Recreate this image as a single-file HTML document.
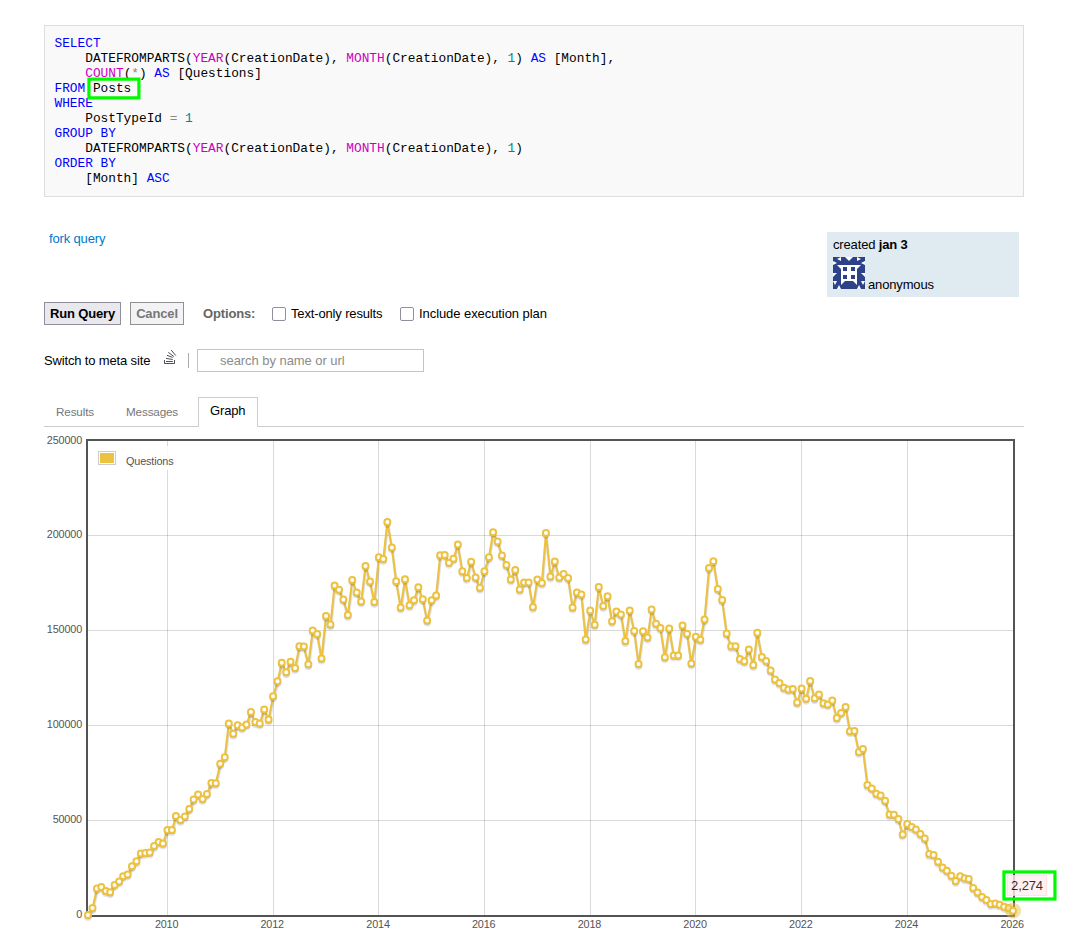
<!DOCTYPE html>
<html lang="en">
<head>
<meta charset="utf-8">
<title>Questions per month - Stack Exchange Data Explorer</title>
<style>
html,body{margin:0;padding:0;background:#fff;}
body{width:1067px;height:944px;position:relative;overflow:hidden;font-family:"Liberation Sans",Arial,sans-serif;font-size:13px;color:#000;letter-spacing:-0.15px;}
.abs{position:absolute;white-space:nowrap;}
pre.code{position:absolute;left:44px;top:25px;width:958.5px;height:150px;margin:0;padding:10px 10px 10px 9.5px;border:1px solid #ddd;background:#f9f9f9;
 font-family:"Liberation Mono","DejaVu Sans Mono",monospace;font-size:12.8px;line-height:15px;color:#000;box-sizing:content-box;letter-spacing:0;}
.k{color:#0000ff}.f{color:#cc00bb}.n{color:#008a8a}.o{color:#888}
.hl{position:absolute;border:3px solid #0be60b;box-sizing:border-box;}
a.fork{position:absolute;left:49px;top:231px;color:#0077cc;text-decoration:none;line-height:15px;}
.uinfo{position:absolute;left:827px;top:232px;width:192px;height:65px;background:#e0eaf1;}
.uinfo .t{position:absolute;left:6px;top:5px;line-height:15px;white-space:nowrap;}
.uinfo .ident{position:absolute;left:6px;top:25px;}
.uinfo .u{position:absolute;left:41px;top:45px;line-height:15px;}
.btn{position:absolute;top:302px;height:23px;box-sizing:border-box;border:1px solid #8f8f9d;background:#e9e9ed;font-weight:bold;font-size:13px;line-height:21px;text-align:center;color:#000;}
.btn.dis{background:#f3f3f5;color:#777;border-color:#919191;}
.opt{position:absolute;top:306px;left:203px;font-weight:bold;color:#666;line-height:15px;}
.cb{position:absolute;top:307px;width:14px;height:14px;box-sizing:border-box;border:1px solid #8f8f9d;border-radius:2px;background:#fff;}
.lbl{position:absolute;top:306px;line-height:15px;}
.sw{position:absolute;left:44px;top:353px;line-height:15px;}
.soicon{position:absolute;left:160px;top:346px;}
.sep{position:absolute;left:188px;top:353px;width:1px;height:15px;background:#aaa;}
.search{position:absolute;left:197px;top:349px;width:227px;height:23px;box-sizing:border-box;border:1px solid #c4c4c4;background:#fff;color:#8b8b8b;line-height:21px;padding-left:22px;letter-spacing:-0.05px;}
.tabs{position:absolute;left:44px;top:426px;width:980px;height:1px;background:#ccc;}
.tab{position:absolute;color:#777;font-size:11.7px;line-height:14px;top:405px;}
.tab.act{left:198px;top:397px;width:60px;height:30px;box-sizing:border-box;border:1px solid #ccc;border-bottom:0;background:#fff;color:#000;font-size:13px;line-height:15px;padding:5px 0 0 11px;}
svg.chart{position:absolute;left:0;top:0;}
.legbox{position:absolute;left:98px;top:451px;width:18px;height:14px;box-sizing:border-box;border:1px solid #ccc;padding:1px;}
.legbox i{display:block;width:14px;height:10px;background:#edc240;}
.tip{position:absolute;left:1007px;top:875px;width:40px;height:21px;box-sizing:border-box;border:1px solid #fdd;background:#fee;opacity:.8;text-align:center;line-height:17px;padding:1px 0 0 0;color:#000;}
</style>
</head>
<body>
<pre class="code"><span class="k">SELECT</span>
    DATEFROMPARTS(<span class="f">YEAR</span>(CreationDate), <span class="f">MONTH</span>(CreationDate), <span class="n">1</span>) <span class="k">AS</span> [Month],
    <span class="f">COUNT</span>(<span class="o">*</span>) <span class="k">AS</span> [Questions]
<span class="k">FROM</span> Posts
<span class="k">WHERE</span>
    PostTypeId <span class="o">=</span> <span class="n">1</span>
<span class="k">GROUP BY</span>
    DATEFROMPARTS(<span class="f">YEAR</span>(CreationDate), <span class="f">MONTH</span>(CreationDate), <span class="n">1</span>)
<span class="k">ORDER BY</span>
    [Month] <span class="k">ASC</span></pre>

<a class="fork">fork query</a>
<div class="uinfo"><div class="t">created <b>jan 3</b></div><svg class="ident" width="32" height="32" viewBox="0 0 32 32">
<rect width="32" height="32" fill="#2e4289"/>
<g fill="#fff">
<path d="M8 0V4L4 2zM0 4V8L4 6zM12 0H20L16 4zM24 0V4L28 2zM32 4V8L28 6z"/>
<path d="M4 8H28L24 12V28L20 24H12L8 28V12z"/>
<path d="M0 16H4L0 20zM32 16H28L32 20zM0 24H4L2 28zM32 24H28L30 28zM4 32H8L6 28zM28 32H24L26 28z"/>
</g>
<path fill="#2e4289" d="M10 10h4v4h-4zM18 10h4v4h-4zM10 18h4v4h-4zM18 18h4v4h-4z"/>
</svg><div class="u">anonymous</div></div>

<div class="btn" style="left:44px;width:77px">Run Query</div>
<div class="btn dis" style="left:130px;width:54px">Cancel</div>
<div class="opt">Options:</div>
<div class="cb" style="left:272px"></div><div class="lbl" style="left:291px">Text-only results</div>
<div class="cb" style="left:400px"></div><div class="lbl" style="left:419px;letter-spacing:-0.07px">Include execution plan</div>

<div class="sw">Switch to meta site</div>
<svg class="soicon" width="20" height="22" viewBox="0 0 20 22">
<g fill="none" stroke="#4b5055" stroke-width="1">
<path d="M4.5 14V17.5H14.5V14"/>
<path d="M6 15.5H12.8"/>
<path d="M6.1 12.4L12.7 13.5"/>
<path d="M7 9.3L12.7 11.5"/>
<path d="M8.3 6.4L14 10.6"/>
<path d="M11.1 4L15.85 9.6"/>
</g></svg>
<div class="sep"></div>
<div class="search">search by name or url</div>

<div class="tabs"></div>
<div class="tab" style="left:56px">Results</div>
<div class="tab" style="left:126px">Messages</div>
<div class="tab act">Graph</div>

<svg class="chart" width="1067" height="944" viewBox="0 0 1067 944">
<path d="M167.5 441V915M273.5 441V915M378.5 441V915M484.5 441V915M590.5 441V915M695.5 441V915M801.5 441V915M907.5 441V915" stroke="#545454" stroke-opacity="0.22" stroke-width="1" fill="none" shape-rendering="crispEdges"/>
<path d="M88 820.5H1013M88 725.5H1013M88 630.5H1013M88 535.5H1013" stroke="#545454" stroke-opacity="0.22" stroke-width="1" fill="none" shape-rendering="crispEdges"/>
<rect x="95" y="446" width="82" height="24" fill="#fff" fill-opacity="0.85"/>
<rect x="87" y="440" width="927" height="476" fill="none" stroke="#545454" stroke-width="2" shape-rendering="crispEdges"/>
<polyline points="88.43,917.46 92.92,910.46 97.4,890.96 101.75,889.46 106.23,893.46 110.57,894.71 115.06,887.36 119.54,884.06 123.59,878.71 128.08,876.96 132.42,868.71 136.91,863.71 141.25,856.06 145.73,855.36 150.22,854.86 154.56,848.36 159.04,844.36 163.38,845.86 167.87,832.46 172.35,832.56 176.41,818.46 180.89,822.46 185.23,818.96 189.72,811.56 194.06,802.06 198.54,796.96 203.03,801.56 207.37,796.56 211.85,785.46 216.19,785.71 220.68,766.21 225.17,759.76 229.22,725.86 233.7,736.16 238.04,727.71 242.53,729.96 246.87,726.96 251.35,714.56 255.84,724.56 260.18,725.96 264.67,711.86 269.01,721.86 273.49,698.71 277.98,683.71 282.17,665.21 286.66,674.71 291,664.16 295.48,670.56 299.83,648.71 304.31,648.96 308.8,666.71 313.14,633.06 317.62,636.46 321.96,660.86 326.45,618.36 330.93,626.86 334.99,588.06 339.47,592.21 343.81,602.06 348.3,617.46 352.64,582.46 357.12,594.86 361.61,603.96 365.95,568.36 370.43,583.96 374.77,604.36 379.26,559.71 383.75,561.56 387.8,524.36 392.28,549.96 396.62,583.71 401.11,609.96 405.45,581.71 409.93,607.76 414.42,602.76 418.76,589.66 423.25,601.71 427.59,623.06 432.07,602.76 436.56,598.06 440.61,557.76 445.09,557.46 449.43,565.21 453.92,561.21 458.26,546.96 462.75,573.66 467.23,580.36 471.57,564.21 476.06,579.96 480.4,590.21 484.88,573.71 489.37,559.71 493.56,534.71 498.05,543.96 502.39,557.86 506.88,567.46 511.22,581.86 515.7,572.46 520.19,591.86 524.53,584.96 529.01,584.96 533.35,609.56 537.84,581.86 542.33,585.36 546.38,535.56 550.86,579.06 555.2,563.96 559.69,579.96 564.03,576.46 568.51,580.56 573,609.86 577.34,595.06 581.83,597.06 586.17,642.06 590.65,612.96 595.14,627.16 599.19,589.36 603.67,608.46 608.01,598.71 612.5,623.71 616.84,613.96 621.33,616.86 625.81,643.46 630.15,613.06 634.64,633.46 638.98,666.56 643.46,633.71 647.95,640.06 652,612.06 656.49,626.21 660.83,630.36 665.31,659.71 669.65,630.86 674.14,657.86 678.62,658.06 682.96,627.96 687.45,636.21 691.79,665.96 696.27,639.21 700.76,642.21 704.96,621.86 709.44,570.56 713.78,563.71 718.27,591.56 722.61,602.46 727.09,635.96 731.58,648.71 735.92,648.71 740.41,661.56 744.75,663.71 749.23,652.06 753.72,667.46 757.77,635.26 762.25,659.56 766.59,663.46 771.08,672.86 775.42,682.06 779.91,685.56 784.39,690.21 788.73,691.86 793.22,691.46 797.56,704.96 802.04,690.96 806.53,701.21 810.58,683.46 815.06,700.66 819.41,697.06 823.89,705.71 828.23,707.06 832.72,703.06 837.2,720.56 841.54,715.56 846.03,709.56 850.37,733.71 854.85,733.36 859.34,754.56 863.39,751.46 867.88,787.46 872.22,790.91 876.7,796.21 881.04,798.06 885.53,803.21 890.01,817.06 894.35,817.21 898.84,821.46 903.18,836.86 907.67,826.56 912.15,829.56 916.35,832.06 920.83,836.56 925.17,840.86 929.66,856.46 934,857.46 938.48,864.26 942.97,870.06 947.31,873.21 951.8,878.11 956.14,883.46 960.62,878.66 965.11,880.71 969.16,881.36 973.64,890.46 977.99,895.06 982.47,899.56 986.81,902.46 991.3,906.46 995.78,905.96 1000.12,907.16 1004.61,909.16 1008.95,910.46 1013.43,913.16" fill="none" stroke="#000" stroke-opacity="0.1" stroke-width="3" stroke-linejoin="round"/>
<polyline points="88.3,916.72 92.79,909.72 97.27,890.22 101.62,888.72 106.1,892.72 110.44,893.97 114.93,886.62 119.41,883.32 123.46,877.97 127.95,876.22 132.29,867.97 136.77,862.97 141.12,855.32 145.6,854.62 150.09,854.12 154.43,847.62 158.91,843.62 163.25,845.12 167.74,831.72 172.22,831.82 176.28,817.72 180.76,821.72 185.1,818.22 189.59,810.82 193.93,801.32 198.41,796.22 202.9,800.82 207.24,795.82 211.72,784.72 216.06,784.97 220.55,765.47 225.04,759.02 229.09,725.12 233.57,735.42 237.91,726.97 242.4,729.22 246.74,726.22 251.22,713.82 255.71,723.82 260.05,725.22 264.54,711.12 268.88,721.12 273.36,697.97 277.85,682.97 282.04,664.47 286.53,673.97 290.87,663.42 295.35,669.82 299.7,647.97 304.18,648.22 308.67,665.97 313.01,632.32 317.49,635.72 321.83,660.12 326.32,617.62 330.8,626.12 334.85,587.32 339.34,591.47 343.68,601.32 348.17,616.72 352.51,581.72 356.99,594.12 361.48,603.22 365.82,567.62 370.3,583.22 374.64,603.62 379.13,558.97 383.62,560.82 387.67,523.62 392.15,549.22 396.49,582.97 400.98,609.22 405.32,580.97 409.8,607.02 414.29,602.02 418.63,588.92 423.12,600.97 427.46,622.32 431.94,602.02 436.43,597.32 440.48,557.02 444.96,556.72 449.3,564.47 453.79,560.47 458.13,546.22 462.62,572.92 467.1,579.62 471.44,563.47 475.93,579.22 480.27,589.47 484.75,572.97 489.24,558.97 493.43,533.97 497.92,543.22 502.26,557.12 506.75,566.72 511.09,581.12 515.57,571.72 520.06,591.12 524.4,584.22 528.88,584.22 533.22,608.82 537.71,581.12 542.19,584.62 546.25,534.82 550.73,578.32 555.07,563.22 559.56,579.22 563.9,575.72 568.38,579.82 572.87,609.12 577.21,594.32 581.7,596.32 586.04,641.32 590.52,612.22 595.01,626.42 599.06,588.62 603.54,607.72 607.88,597.97 612.37,622.97 616.71,613.22 621.2,616.12 625.68,642.72 630.02,612.32 634.51,632.72 638.85,665.82 643.33,632.97 647.82,639.32 651.87,611.32 656.35,625.47 660.7,629.62 665.18,658.97 669.52,630.12 674.01,657.12 678.49,657.32 682.83,627.22 687.32,635.47 691.66,665.22 696.14,638.47 700.63,641.47 704.83,621.12 709.31,569.82 713.65,562.97 718.14,590.82 722.48,601.72 726.96,635.22 731.45,647.97 735.79,647.97 740.27,660.82 744.62,662.97 749.1,651.32 753.59,666.72 757.64,634.52 762.12,658.82 766.46,662.72 770.95,672.12 775.29,681.32 779.78,684.82 784.26,689.47 788.6,691.12 793.09,690.72 797.43,704.22 801.91,690.22 806.4,700.47 810.45,682.72 814.93,699.92 819.28,696.32 823.76,704.97 828.1,706.32 832.59,702.32 837.07,719.82 841.41,714.82 845.9,708.82 850.24,732.97 854.72,732.62 859.21,753.82 863.26,750.72 867.75,786.72 872.09,790.17 876.57,795.47 880.91,797.32 885.4,802.47 889.88,816.32 894.22,816.47 898.71,820.72 903.05,836.12 907.54,825.82 912.02,828.82 916.22,831.32 920.7,835.82 925.04,840.12 929.53,855.72 933.87,856.72 938.35,863.52 942.84,869.32 947.18,872.47 951.67,877.37 956.01,882.72 960.49,877.92 964.98,879.97 969.03,880.62 973.51,889.72 977.85,894.32 982.34,898.82 986.68,901.72 991.17,905.72 995.65,905.22 999.99,906.42 1004.48,908.42 1008.82,909.72 1013.3,912.42" fill="none" stroke="#000" stroke-opacity="0.1" stroke-width="1.5" stroke-linejoin="round"/>
<polyline points="88,915 92.49,908 96.97,888.5 101.31,887 105.8,891 110.14,892.25 114.62,884.9 119.11,881.6 123.16,876.25 127.64,874.5 131.99,866.25 136.47,861.25 140.81,853.6 145.3,852.9 149.78,852.4 154.12,845.9 158.61,841.9 162.95,843.4 167.43,830 171.92,830.1 175.97,816 180.46,820 184.8,816.5 189.28,809.1 193.62,799.6 198.11,794.5 202.59,799.1 206.93,794.1 211.42,783 215.76,783.25 220.25,763.75 224.73,757.3 228.78,723.4 233.27,733.7 237.61,725.25 242.09,727.5 246.44,724.5 250.92,712.1 255.41,722.1 259.75,723.5 264.23,709.4 268.57,719.4 273.06,696.25 277.54,681.25 281.74,662.75 286.22,672.25 290.57,661.7 295.05,668.1 299.39,646.25 303.88,646.5 308.36,664.25 312.7,630.6 317.19,634 321.53,658.4 326.01,615.9 330.5,624.4 334.55,585.6 339.04,589.75 343.38,599.6 347.86,615 352.2,580 356.69,592.4 361.17,601.5 365.51,565.9 370,581.5 374.34,601.9 378.83,557.25 383.31,559.1 387.36,521.9 391.85,547.5 396.19,581.25 400.67,607.5 405.01,579.25 409.5,605.3 413.99,600.3 418.33,587.2 422.81,599.25 427.15,620.6 431.64,600.3 436.12,595.6 440.17,555.3 444.66,555 449,562.75 453.49,558.75 457.83,544.5 462.31,571.2 466.8,577.9 471.14,561.75 475.62,577.5 479.96,587.75 484.45,571.25 488.93,557.25 493.13,532.25 497.62,541.5 501.96,555.4 506.44,565 510.78,579.4 515.27,570 519.75,589.4 524.09,582.5 528.58,582.5 532.92,607.1 537.41,579.4 541.89,582.9 545.94,533.1 550.43,576.6 554.77,561.5 559.25,577.5 563.59,574 568.08,578.1 572.57,607.4 576.91,592.6 581.39,594.6 585.73,639.6 590.22,610.5 594.7,624.7 598.75,586.9 603.24,606 607.58,596.25 612.07,621.25 616.41,611.5 620.89,614.4 625.38,641 629.72,610.6 634.2,631 638.54,664.1 643.03,631.25 647.51,637.6 651.57,609.6 656.05,623.75 660.39,627.9 664.88,657.25 669.22,628.4 673.7,655.4 678.19,655.6 682.53,625.5 687.01,633.75 691.36,663.5 695.84,636.75 700.33,639.75 704.52,619.4 709.01,568.1 713.35,561.25 717.83,589.1 722.17,600 726.66,633.5 731.14,646.25 735.49,646.25 739.97,659.1 744.31,661.25 748.8,649.6 753.28,665 757.33,632.8 761.82,657.1 766.16,661 770.65,670.4 774.99,679.6 779.47,683.1 783.96,687.75 788.3,689.4 792.78,689 797.12,702.5 801.61,688.5 806.09,698.75 810.15,681 814.63,698.2 818.97,694.6 823.46,703.25 827.8,704.6 832.28,700.6 836.77,718.1 841.11,713.1 845.59,707.1 849.93,731.25 854.42,730.9 858.91,752.1 862.96,749 867.44,785 871.78,788.45 876.27,793.75 880.61,795.6 885.09,800.75 889.58,814.6 893.92,814.75 898.41,819 902.75,834.4 907.23,824.1 911.72,827.1 915.91,829.6 920.4,834.1 924.74,838.4 929.22,854 933.57,855 938.05,861.8 942.54,867.6 946.88,870.75 951.36,875.65 955.7,881 960.19,876.2 964.67,878.25 968.73,878.9 973.21,888 977.55,892.6 982.04,897.1 986.38,900 990.86,904 995.35,903.5 999.69,904.7 1004.17,906.7 1008.51,908 1013,910.7" fill="none" stroke="#edc240" stroke-width="2" stroke-linejoin="round"/>
<path d="M91 917.25a3 3 0 0 1 -6 0M95.49 910.25a3 3 0 0 1 -6 0M99.97 890.75a3 3 0 0 1 -6 0M104.31 889.25a3 3 0 0 1 -6 0M108.8 893.25a3 3 0 0 1 -6 0M113.14 894.5a3 3 0 0 1 -6 0M117.62 887.15a3 3 0 0 1 -6 0M122.11 883.85a3 3 0 0 1 -6 0M126.16 878.5a3 3 0 0 1 -6 0M130.64 876.75a3 3 0 0 1 -6 0M134.99 868.5a3 3 0 0 1 -6 0M139.47 863.5a3 3 0 0 1 -6 0M143.81 855.85a3 3 0 0 1 -6 0M148.3 855.15a3 3 0 0 1 -6 0M152.78 854.65a3 3 0 0 1 -6 0M157.12 848.15a3 3 0 0 1 -6 0M161.61 844.15a3 3 0 0 1 -6 0M165.95 845.65a3 3 0 0 1 -6 0M170.43 832.25a3 3 0 0 1 -6 0M174.92 832.35a3 3 0 0 1 -6 0M178.97 818.25a3 3 0 0 1 -6 0M183.46 822.25a3 3 0 0 1 -6 0M187.8 818.75a3 3 0 0 1 -6 0M192.28 811.35a3 3 0 0 1 -6 0M196.62 801.85a3 3 0 0 1 -6 0M201.11 796.75a3 3 0 0 1 -6 0M205.59 801.35a3 3 0 0 1 -6 0M209.93 796.35a3 3 0 0 1 -6 0M214.42 785.25a3 3 0 0 1 -6 0M218.76 785.5a3 3 0 0 1 -6 0M223.25 766a3 3 0 0 1 -6 0M227.73 759.55a3 3 0 0 1 -6 0M231.78 725.65a3 3 0 0 1 -6 0M236.27 735.95a3 3 0 0 1 -6 0M240.61 727.5a3 3 0 0 1 -6 0M245.09 729.75a3 3 0 0 1 -6 0M249.44 726.75a3 3 0 0 1 -6 0M253.92 714.35a3 3 0 0 1 -6 0M258.41 724.35a3 3 0 0 1 -6 0M262.75 725.75a3 3 0 0 1 -6 0M267.23 711.65a3 3 0 0 1 -6 0M271.57 721.65a3 3 0 0 1 -6 0M276.06 698.5a3 3 0 0 1 -6 0M280.54 683.5a3 3 0 0 1 -6 0M284.74 665a3 3 0 0 1 -6 0M289.22 674.5a3 3 0 0 1 -6 0M293.57 663.95a3 3 0 0 1 -6 0M298.05 670.35a3 3 0 0 1 -6 0M302.39 648.5a3 3 0 0 1 -6 0M306.88 648.75a3 3 0 0 1 -6 0M311.36 666.5a3 3 0 0 1 -6 0M315.7 632.85a3 3 0 0 1 -6 0M320.19 636.25a3 3 0 0 1 -6 0M324.53 660.65a3 3 0 0 1 -6 0M329.01 618.15a3 3 0 0 1 -6 0M333.5 626.65a3 3 0 0 1 -6 0M337.55 587.85a3 3 0 0 1 -6 0M342.04 592a3 3 0 0 1 -6 0M346.38 601.85a3 3 0 0 1 -6 0M350.86 617.25a3 3 0 0 1 -6 0M355.2 582.25a3 3 0 0 1 -6 0M359.69 594.65a3 3 0 0 1 -6 0M364.17 603.75a3 3 0 0 1 -6 0M368.51 568.15a3 3 0 0 1 -6 0M373 583.75a3 3 0 0 1 -6 0M377.34 604.15a3 3 0 0 1 -6 0M381.83 559.5a3 3 0 0 1 -6 0M386.31 561.35a3 3 0 0 1 -6 0M390.36 524.15a3 3 0 0 1 -6 0M394.85 549.75a3 3 0 0 1 -6 0M399.19 583.5a3 3 0 0 1 -6 0M403.67 609.75a3 3 0 0 1 -6 0M408.01 581.5a3 3 0 0 1 -6 0M412.5 607.55a3 3 0 0 1 -6 0M416.99 602.55a3 3 0 0 1 -6 0M421.33 589.45a3 3 0 0 1 -6 0M425.81 601.5a3 3 0 0 1 -6 0M430.15 622.85a3 3 0 0 1 -6 0M434.64 602.55a3 3 0 0 1 -6 0M439.12 597.85a3 3 0 0 1 -6 0M443.17 557.55a3 3 0 0 1 -6 0M447.66 557.25a3 3 0 0 1 -6 0M452 565a3 3 0 0 1 -6 0M456.49 561a3 3 0 0 1 -6 0M460.83 546.75a3 3 0 0 1 -6 0M465.31 573.45a3 3 0 0 1 -6 0M469.8 580.15a3 3 0 0 1 -6 0M474.14 564a3 3 0 0 1 -6 0M478.62 579.75a3 3 0 0 1 -6 0M482.96 590a3 3 0 0 1 -6 0M487.45 573.5a3 3 0 0 1 -6 0M491.93 559.5a3 3 0 0 1 -6 0M496.13 534.5a3 3 0 0 1 -6 0M500.62 543.75a3 3 0 0 1 -6 0M504.96 557.65a3 3 0 0 1 -6 0M509.44 567.25a3 3 0 0 1 -6 0M513.78 581.65a3 3 0 0 1 -6 0M518.27 572.25a3 3 0 0 1 -6 0M522.75 591.65a3 3 0 0 1 -6 0M527.09 584.75a3 3 0 0 1 -6 0M531.58 584.75a3 3 0 0 1 -6 0M535.92 609.35a3 3 0 0 1 -6 0M540.41 581.65a3 3 0 0 1 -6 0M544.89 585.15a3 3 0 0 1 -6 0M548.94 535.35a3 3 0 0 1 -6 0M553.43 578.85a3 3 0 0 1 -6 0M557.77 563.75a3 3 0 0 1 -6 0M562.25 579.75a3 3 0 0 1 -6 0M566.59 576.25a3 3 0 0 1 -6 0M571.08 580.35a3 3 0 0 1 -6 0M575.57 609.65a3 3 0 0 1 -6 0M579.91 594.85a3 3 0 0 1 -6 0M584.39 596.85a3 3 0 0 1 -6 0M588.73 641.85a3 3 0 0 1 -6 0M593.22 612.75a3 3 0 0 1 -6 0M597.7 626.95a3 3 0 0 1 -6 0M601.75 589.15a3 3 0 0 1 -6 0M606.24 608.25a3 3 0 0 1 -6 0M610.58 598.5a3 3 0 0 1 -6 0M615.07 623.5a3 3 0 0 1 -6 0M619.41 613.75a3 3 0 0 1 -6 0M623.89 616.65a3 3 0 0 1 -6 0M628.38 643.25a3 3 0 0 1 -6 0M632.72 612.85a3 3 0 0 1 -6 0M637.2 633.25a3 3 0 0 1 -6 0M641.54 666.35a3 3 0 0 1 -6 0M646.03 633.5a3 3 0 0 1 -6 0M650.51 639.85a3 3 0 0 1 -6 0M654.57 611.85a3 3 0 0 1 -6 0M659.05 626a3 3 0 0 1 -6 0M663.39 630.15a3 3 0 0 1 -6 0M667.88 659.5a3 3 0 0 1 -6 0M672.22 630.65a3 3 0 0 1 -6 0M676.7 657.65a3 3 0 0 1 -6 0M681.19 657.85a3 3 0 0 1 -6 0M685.53 627.75a3 3 0 0 1 -6 0M690.01 636a3 3 0 0 1 -6 0M694.36 665.75a3 3 0 0 1 -6 0M698.84 639a3 3 0 0 1 -6 0M703.33 642a3 3 0 0 1 -6 0M707.52 621.65a3 3 0 0 1 -6 0M712.01 570.35a3 3 0 0 1 -6 0M716.35 563.5a3 3 0 0 1 -6 0M720.83 591.35a3 3 0 0 1 -6 0M725.17 602.25a3 3 0 0 1 -6 0M729.66 635.75a3 3 0 0 1 -6 0M734.14 648.5a3 3 0 0 1 -6 0M738.49 648.5a3 3 0 0 1 -6 0M742.97 661.35a3 3 0 0 1 -6 0M747.31 663.5a3 3 0 0 1 -6 0M751.8 651.85a3 3 0 0 1 -6 0M756.28 667.25a3 3 0 0 1 -6 0M760.33 635.05a3 3 0 0 1 -6 0M764.82 659.35a3 3 0 0 1 -6 0M769.16 663.25a3 3 0 0 1 -6 0M773.65 672.65a3 3 0 0 1 -6 0M777.99 681.85a3 3 0 0 1 -6 0M782.47 685.35a3 3 0 0 1 -6 0M786.96 690a3 3 0 0 1 -6 0M791.3 691.65a3 3 0 0 1 -6 0M795.78 691.25a3 3 0 0 1 -6 0M800.12 704.75a3 3 0 0 1 -6 0M804.61 690.75a3 3 0 0 1 -6 0M809.09 701a3 3 0 0 1 -6 0M813.15 683.25a3 3 0 0 1 -6 0M817.63 700.45a3 3 0 0 1 -6 0M821.97 696.85a3 3 0 0 1 -6 0M826.46 705.5a3 3 0 0 1 -6 0M830.8 706.85a3 3 0 0 1 -6 0M835.28 702.85a3 3 0 0 1 -6 0M839.77 720.35a3 3 0 0 1 -6 0M844.11 715.35a3 3 0 0 1 -6 0M848.59 709.35a3 3 0 0 1 -6 0M852.93 733.5a3 3 0 0 1 -6 0M857.42 733.15a3 3 0 0 1 -6 0M861.91 754.35a3 3 0 0 1 -6 0M865.96 751.25a3 3 0 0 1 -6 0M870.44 787.25a3 3 0 0 1 -6 0M874.78 790.7a3 3 0 0 1 -6 0M879.27 796a3 3 0 0 1 -6 0M883.61 797.85a3 3 0 0 1 -6 0M888.09 803a3 3 0 0 1 -6 0M892.58 816.85a3 3 0 0 1 -6 0M896.92 817a3 3 0 0 1 -6 0M901.41 821.25a3 3 0 0 1 -6 0M905.75 836.65a3 3 0 0 1 -6 0M910.23 826.35a3 3 0 0 1 -6 0M914.72 829.35a3 3 0 0 1 -6 0M918.91 831.85a3 3 0 0 1 -6 0M923.4 836.35a3 3 0 0 1 -6 0M927.74 840.65a3 3 0 0 1 -6 0M932.22 856.25a3 3 0 0 1 -6 0M936.57 857.25a3 3 0 0 1 -6 0M941.05 864.05a3 3 0 0 1 -6 0M945.54 869.85a3 3 0 0 1 -6 0M949.88 873a3 3 0 0 1 -6 0M954.36 877.9a3 3 0 0 1 -6 0M958.7 883.25a3 3 0 0 1 -6 0M963.19 878.45a3 3 0 0 1 -6 0M967.67 880.5a3 3 0 0 1 -6 0M971.73 881.15a3 3 0 0 1 -6 0M976.21 890.25a3 3 0 0 1 -6 0M980.55 894.85a3 3 0 0 1 -6 0M985.04 899.35a3 3 0 0 1 -6 0M989.38 902.25a3 3 0 0 1 -6 0M993.86 906.25a3 3 0 0 1 -6 0M998.35 905.75a3 3 0 0 1 -6 0M1002.69 906.95a3 3 0 0 1 -6 0M1007.17 908.95a3 3 0 0 1 -6 0M1011.51 910.25a3 3 0 0 1 -6 0M1016 912.95a3 3 0 0 1 -6 0" fill="none" stroke="#000" stroke-opacity="0.1" stroke-width="1.5"/>
<path d="M91 915.75a3 3 0 0 1 -6 0M95.49 908.75a3 3 0 0 1 -6 0M99.97 889.25a3 3 0 0 1 -6 0M104.31 887.75a3 3 0 0 1 -6 0M108.8 891.75a3 3 0 0 1 -6 0M113.14 893a3 3 0 0 1 -6 0M117.62 885.65a3 3 0 0 1 -6 0M122.11 882.35a3 3 0 0 1 -6 0M126.16 877a3 3 0 0 1 -6 0M130.64 875.25a3 3 0 0 1 -6 0M134.99 867a3 3 0 0 1 -6 0M139.47 862a3 3 0 0 1 -6 0M143.81 854.35a3 3 0 0 1 -6 0M148.3 853.65a3 3 0 0 1 -6 0M152.78 853.15a3 3 0 0 1 -6 0M157.12 846.65a3 3 0 0 1 -6 0M161.61 842.65a3 3 0 0 1 -6 0M165.95 844.15a3 3 0 0 1 -6 0M170.43 830.75a3 3 0 0 1 -6 0M174.92 830.85a3 3 0 0 1 -6 0M178.97 816.75a3 3 0 0 1 -6 0M183.46 820.75a3 3 0 0 1 -6 0M187.8 817.25a3 3 0 0 1 -6 0M192.28 809.85a3 3 0 0 1 -6 0M196.62 800.35a3 3 0 0 1 -6 0M201.11 795.25a3 3 0 0 1 -6 0M205.59 799.85a3 3 0 0 1 -6 0M209.93 794.85a3 3 0 0 1 -6 0M214.42 783.75a3 3 0 0 1 -6 0M218.76 784a3 3 0 0 1 -6 0M223.25 764.5a3 3 0 0 1 -6 0M227.73 758.05a3 3 0 0 1 -6 0M231.78 724.15a3 3 0 0 1 -6 0M236.27 734.45a3 3 0 0 1 -6 0M240.61 726a3 3 0 0 1 -6 0M245.09 728.25a3 3 0 0 1 -6 0M249.44 725.25a3 3 0 0 1 -6 0M253.92 712.85a3 3 0 0 1 -6 0M258.41 722.85a3 3 0 0 1 -6 0M262.75 724.25a3 3 0 0 1 -6 0M267.23 710.15a3 3 0 0 1 -6 0M271.57 720.15a3 3 0 0 1 -6 0M276.06 697a3 3 0 0 1 -6 0M280.54 682a3 3 0 0 1 -6 0M284.74 663.5a3 3 0 0 1 -6 0M289.22 673a3 3 0 0 1 -6 0M293.57 662.45a3 3 0 0 1 -6 0M298.05 668.85a3 3 0 0 1 -6 0M302.39 647a3 3 0 0 1 -6 0M306.88 647.25a3 3 0 0 1 -6 0M311.36 665a3 3 0 0 1 -6 0M315.7 631.35a3 3 0 0 1 -6 0M320.19 634.75a3 3 0 0 1 -6 0M324.53 659.15a3 3 0 0 1 -6 0M329.01 616.65a3 3 0 0 1 -6 0M333.5 625.15a3 3 0 0 1 -6 0M337.55 586.35a3 3 0 0 1 -6 0M342.04 590.5a3 3 0 0 1 -6 0M346.38 600.35a3 3 0 0 1 -6 0M350.86 615.75a3 3 0 0 1 -6 0M355.2 580.75a3 3 0 0 1 -6 0M359.69 593.15a3 3 0 0 1 -6 0M364.17 602.25a3 3 0 0 1 -6 0M368.51 566.65a3 3 0 0 1 -6 0M373 582.25a3 3 0 0 1 -6 0M377.34 602.65a3 3 0 0 1 -6 0M381.83 558a3 3 0 0 1 -6 0M386.31 559.85a3 3 0 0 1 -6 0M390.36 522.65a3 3 0 0 1 -6 0M394.85 548.25a3 3 0 0 1 -6 0M399.19 582a3 3 0 0 1 -6 0M403.67 608.25a3 3 0 0 1 -6 0M408.01 580a3 3 0 0 1 -6 0M412.5 606.05a3 3 0 0 1 -6 0M416.99 601.05a3 3 0 0 1 -6 0M421.33 587.95a3 3 0 0 1 -6 0M425.81 600a3 3 0 0 1 -6 0M430.15 621.35a3 3 0 0 1 -6 0M434.64 601.05a3 3 0 0 1 -6 0M439.12 596.35a3 3 0 0 1 -6 0M443.17 556.05a3 3 0 0 1 -6 0M447.66 555.75a3 3 0 0 1 -6 0M452 563.5a3 3 0 0 1 -6 0M456.49 559.5a3 3 0 0 1 -6 0M460.83 545.25a3 3 0 0 1 -6 0M465.31 571.95a3 3 0 0 1 -6 0M469.8 578.65a3 3 0 0 1 -6 0M474.14 562.5a3 3 0 0 1 -6 0M478.62 578.25a3 3 0 0 1 -6 0M482.96 588.5a3 3 0 0 1 -6 0M487.45 572a3 3 0 0 1 -6 0M491.93 558a3 3 0 0 1 -6 0M496.13 533a3 3 0 0 1 -6 0M500.62 542.25a3 3 0 0 1 -6 0M504.96 556.15a3 3 0 0 1 -6 0M509.44 565.75a3 3 0 0 1 -6 0M513.78 580.15a3 3 0 0 1 -6 0M518.27 570.75a3 3 0 0 1 -6 0M522.75 590.15a3 3 0 0 1 -6 0M527.09 583.25a3 3 0 0 1 -6 0M531.58 583.25a3 3 0 0 1 -6 0M535.92 607.85a3 3 0 0 1 -6 0M540.41 580.15a3 3 0 0 1 -6 0M544.89 583.65a3 3 0 0 1 -6 0M548.94 533.85a3 3 0 0 1 -6 0M553.43 577.35a3 3 0 0 1 -6 0M557.77 562.25a3 3 0 0 1 -6 0M562.25 578.25a3 3 0 0 1 -6 0M566.59 574.75a3 3 0 0 1 -6 0M571.08 578.85a3 3 0 0 1 -6 0M575.57 608.15a3 3 0 0 1 -6 0M579.91 593.35a3 3 0 0 1 -6 0M584.39 595.35a3 3 0 0 1 -6 0M588.73 640.35a3 3 0 0 1 -6 0M593.22 611.25a3 3 0 0 1 -6 0M597.7 625.45a3 3 0 0 1 -6 0M601.75 587.65a3 3 0 0 1 -6 0M606.24 606.75a3 3 0 0 1 -6 0M610.58 597a3 3 0 0 1 -6 0M615.07 622a3 3 0 0 1 -6 0M619.41 612.25a3 3 0 0 1 -6 0M623.89 615.15a3 3 0 0 1 -6 0M628.38 641.75a3 3 0 0 1 -6 0M632.72 611.35a3 3 0 0 1 -6 0M637.2 631.75a3 3 0 0 1 -6 0M641.54 664.85a3 3 0 0 1 -6 0M646.03 632a3 3 0 0 1 -6 0M650.51 638.35a3 3 0 0 1 -6 0M654.57 610.35a3 3 0 0 1 -6 0M659.05 624.5a3 3 0 0 1 -6 0M663.39 628.65a3 3 0 0 1 -6 0M667.88 658a3 3 0 0 1 -6 0M672.22 629.15a3 3 0 0 1 -6 0M676.7 656.15a3 3 0 0 1 -6 0M681.19 656.35a3 3 0 0 1 -6 0M685.53 626.25a3 3 0 0 1 -6 0M690.01 634.5a3 3 0 0 1 -6 0M694.36 664.25a3 3 0 0 1 -6 0M698.84 637.5a3 3 0 0 1 -6 0M703.33 640.5a3 3 0 0 1 -6 0M707.52 620.15a3 3 0 0 1 -6 0M712.01 568.85a3 3 0 0 1 -6 0M716.35 562a3 3 0 0 1 -6 0M720.83 589.85a3 3 0 0 1 -6 0M725.17 600.75a3 3 0 0 1 -6 0M729.66 634.25a3 3 0 0 1 -6 0M734.14 647a3 3 0 0 1 -6 0M738.49 647a3 3 0 0 1 -6 0M742.97 659.85a3 3 0 0 1 -6 0M747.31 662a3 3 0 0 1 -6 0M751.8 650.35a3 3 0 0 1 -6 0M756.28 665.75a3 3 0 0 1 -6 0M760.33 633.55a3 3 0 0 1 -6 0M764.82 657.85a3 3 0 0 1 -6 0M769.16 661.75a3 3 0 0 1 -6 0M773.65 671.15a3 3 0 0 1 -6 0M777.99 680.35a3 3 0 0 1 -6 0M782.47 683.85a3 3 0 0 1 -6 0M786.96 688.5a3 3 0 0 1 -6 0M791.3 690.15a3 3 0 0 1 -6 0M795.78 689.75a3 3 0 0 1 -6 0M800.12 703.25a3 3 0 0 1 -6 0M804.61 689.25a3 3 0 0 1 -6 0M809.09 699.5a3 3 0 0 1 -6 0M813.15 681.75a3 3 0 0 1 -6 0M817.63 698.95a3 3 0 0 1 -6 0M821.97 695.35a3 3 0 0 1 -6 0M826.46 704a3 3 0 0 1 -6 0M830.8 705.35a3 3 0 0 1 -6 0M835.28 701.35a3 3 0 0 1 -6 0M839.77 718.85a3 3 0 0 1 -6 0M844.11 713.85a3 3 0 0 1 -6 0M848.59 707.85a3 3 0 0 1 -6 0M852.93 732a3 3 0 0 1 -6 0M857.42 731.65a3 3 0 0 1 -6 0M861.91 752.85a3 3 0 0 1 -6 0M865.96 749.75a3 3 0 0 1 -6 0M870.44 785.75a3 3 0 0 1 -6 0M874.78 789.2a3 3 0 0 1 -6 0M879.27 794.5a3 3 0 0 1 -6 0M883.61 796.35a3 3 0 0 1 -6 0M888.09 801.5a3 3 0 0 1 -6 0M892.58 815.35a3 3 0 0 1 -6 0M896.92 815.5a3 3 0 0 1 -6 0M901.41 819.75a3 3 0 0 1 -6 0M905.75 835.15a3 3 0 0 1 -6 0M910.23 824.85a3 3 0 0 1 -6 0M914.72 827.85a3 3 0 0 1 -6 0M918.91 830.35a3 3 0 0 1 -6 0M923.4 834.85a3 3 0 0 1 -6 0M927.74 839.15a3 3 0 0 1 -6 0M932.22 854.75a3 3 0 0 1 -6 0M936.57 855.75a3 3 0 0 1 -6 0M941.05 862.55a3 3 0 0 1 -6 0M945.54 868.35a3 3 0 0 1 -6 0M949.88 871.5a3 3 0 0 1 -6 0M954.36 876.4a3 3 0 0 1 -6 0M958.7 881.75a3 3 0 0 1 -6 0M963.19 876.95a3 3 0 0 1 -6 0M967.67 879a3 3 0 0 1 -6 0M971.73 879.65a3 3 0 0 1 -6 0M976.21 888.75a3 3 0 0 1 -6 0M980.55 893.35a3 3 0 0 1 -6 0M985.04 897.85a3 3 0 0 1 -6 0M989.38 900.75a3 3 0 0 1 -6 0M993.86 904.75a3 3 0 0 1 -6 0M998.35 904.25a3 3 0 0 1 -6 0M1002.69 905.45a3 3 0 0 1 -6 0M1007.17 907.45a3 3 0 0 1 -6 0M1011.51 908.75a3 3 0 0 1 -6 0M1016 911.45a3 3 0 0 1 -6 0" fill="none" stroke="#000" stroke-opacity="0.2" stroke-width="1.5"/>
<g fill="#fff" stroke="#edc240" stroke-width="2">
<circle cx="88" cy="915" r="3"/><circle cx="92.49" cy="908" r="3"/><circle cx="96.97" cy="888.5" r="3"/><circle cx="101.31" cy="887" r="3"/><circle cx="105.8" cy="891" r="3"/><circle cx="110.14" cy="892.25" r="3"/><circle cx="114.62" cy="884.9" r="3"/><circle cx="119.11" cy="881.6" r="3"/><circle cx="123.16" cy="876.25" r="3"/><circle cx="127.64" cy="874.5" r="3"/><circle cx="131.99" cy="866.25" r="3"/><circle cx="136.47" cy="861.25" r="3"/><circle cx="140.81" cy="853.6" r="3"/><circle cx="145.3" cy="852.9" r="3"/><circle cx="149.78" cy="852.4" r="3"/><circle cx="154.12" cy="845.9" r="3"/><circle cx="158.61" cy="841.9" r="3"/><circle cx="162.95" cy="843.4" r="3"/><circle cx="167.43" cy="830" r="3"/><circle cx="171.92" cy="830.1" r="3"/><circle cx="175.97" cy="816" r="3"/><circle cx="180.46" cy="820" r="3"/><circle cx="184.8" cy="816.5" r="3"/><circle cx="189.28" cy="809.1" r="3"/><circle cx="193.62" cy="799.6" r="3"/><circle cx="198.11" cy="794.5" r="3"/><circle cx="202.59" cy="799.1" r="3"/><circle cx="206.93" cy="794.1" r="3"/><circle cx="211.42" cy="783" r="3"/><circle cx="215.76" cy="783.25" r="3"/><circle cx="220.25" cy="763.75" r="3"/><circle cx="224.73" cy="757.3" r="3"/><circle cx="228.78" cy="723.4" r="3"/><circle cx="233.27" cy="733.7" r="3"/><circle cx="237.61" cy="725.25" r="3"/><circle cx="242.09" cy="727.5" r="3"/><circle cx="246.44" cy="724.5" r="3"/><circle cx="250.92" cy="712.1" r="3"/><circle cx="255.41" cy="722.1" r="3"/><circle cx="259.75" cy="723.5" r="3"/><circle cx="264.23" cy="709.4" r="3"/><circle cx="268.57" cy="719.4" r="3"/><circle cx="273.06" cy="696.25" r="3"/><circle cx="277.54" cy="681.25" r="3"/><circle cx="281.74" cy="662.75" r="3"/><circle cx="286.22" cy="672.25" r="3"/><circle cx="290.57" cy="661.7" r="3"/><circle cx="295.05" cy="668.1" r="3"/><circle cx="299.39" cy="646.25" r="3"/><circle cx="303.88" cy="646.5" r="3"/><circle cx="308.36" cy="664.25" r="3"/><circle cx="312.7" cy="630.6" r="3"/><circle cx="317.19" cy="634" r="3"/><circle cx="321.53" cy="658.4" r="3"/><circle cx="326.01" cy="615.9" r="3"/><circle cx="330.5" cy="624.4" r="3"/><circle cx="334.55" cy="585.6" r="3"/><circle cx="339.04" cy="589.75" r="3"/><circle cx="343.38" cy="599.6" r="3"/><circle cx="347.86" cy="615" r="3"/><circle cx="352.2" cy="580" r="3"/><circle cx="356.69" cy="592.4" r="3"/><circle cx="361.17" cy="601.5" r="3"/><circle cx="365.51" cy="565.9" r="3"/><circle cx="370" cy="581.5" r="3"/><circle cx="374.34" cy="601.9" r="3"/><circle cx="378.83" cy="557.25" r="3"/><circle cx="383.31" cy="559.1" r="3"/><circle cx="387.36" cy="521.9" r="3"/><circle cx="391.85" cy="547.5" r="3"/><circle cx="396.19" cy="581.25" r="3"/><circle cx="400.67" cy="607.5" r="3"/><circle cx="405.01" cy="579.25" r="3"/><circle cx="409.5" cy="605.3" r="3"/><circle cx="413.99" cy="600.3" r="3"/><circle cx="418.33" cy="587.2" r="3"/><circle cx="422.81" cy="599.25" r="3"/><circle cx="427.15" cy="620.6" r="3"/><circle cx="431.64" cy="600.3" r="3"/><circle cx="436.12" cy="595.6" r="3"/><circle cx="440.17" cy="555.3" r="3"/><circle cx="444.66" cy="555" r="3"/><circle cx="449" cy="562.75" r="3"/><circle cx="453.49" cy="558.75" r="3"/><circle cx="457.83" cy="544.5" r="3"/><circle cx="462.31" cy="571.2" r="3"/><circle cx="466.8" cy="577.9" r="3"/><circle cx="471.14" cy="561.75" r="3"/><circle cx="475.62" cy="577.5" r="3"/><circle cx="479.96" cy="587.75" r="3"/><circle cx="484.45" cy="571.25" r="3"/><circle cx="488.93" cy="557.25" r="3"/><circle cx="493.13" cy="532.25" r="3"/><circle cx="497.62" cy="541.5" r="3"/><circle cx="501.96" cy="555.4" r="3"/><circle cx="506.44" cy="565" r="3"/><circle cx="510.78" cy="579.4" r="3"/><circle cx="515.27" cy="570" r="3"/><circle cx="519.75" cy="589.4" r="3"/><circle cx="524.09" cy="582.5" r="3"/><circle cx="528.58" cy="582.5" r="3"/><circle cx="532.92" cy="607.1" r="3"/><circle cx="537.41" cy="579.4" r="3"/><circle cx="541.89" cy="582.9" r="3"/><circle cx="545.94" cy="533.1" r="3"/><circle cx="550.43" cy="576.6" r="3"/><circle cx="554.77" cy="561.5" r="3"/><circle cx="559.25" cy="577.5" r="3"/><circle cx="563.59" cy="574" r="3"/><circle cx="568.08" cy="578.1" r="3"/><circle cx="572.57" cy="607.4" r="3"/><circle cx="576.91" cy="592.6" r="3"/><circle cx="581.39" cy="594.6" r="3"/><circle cx="585.73" cy="639.6" r="3"/><circle cx="590.22" cy="610.5" r="3"/><circle cx="594.7" cy="624.7" r="3"/><circle cx="598.75" cy="586.9" r="3"/><circle cx="603.24" cy="606" r="3"/><circle cx="607.58" cy="596.25" r="3"/><circle cx="612.07" cy="621.25" r="3"/><circle cx="616.41" cy="611.5" r="3"/><circle cx="620.89" cy="614.4" r="3"/><circle cx="625.38" cy="641" r="3"/><circle cx="629.72" cy="610.6" r="3"/><circle cx="634.2" cy="631" r="3"/><circle cx="638.54" cy="664.1" r="3"/><circle cx="643.03" cy="631.25" r="3"/><circle cx="647.51" cy="637.6" r="3"/><circle cx="651.57" cy="609.6" r="3"/><circle cx="656.05" cy="623.75" r="3"/><circle cx="660.39" cy="627.9" r="3"/><circle cx="664.88" cy="657.25" r="3"/><circle cx="669.22" cy="628.4" r="3"/><circle cx="673.7" cy="655.4" r="3"/><circle cx="678.19" cy="655.6" r="3"/><circle cx="682.53" cy="625.5" r="3"/><circle cx="687.01" cy="633.75" r="3"/><circle cx="691.36" cy="663.5" r="3"/><circle cx="695.84" cy="636.75" r="3"/><circle cx="700.33" cy="639.75" r="3"/><circle cx="704.52" cy="619.4" r="3"/><circle cx="709.01" cy="568.1" r="3"/><circle cx="713.35" cy="561.25" r="3"/><circle cx="717.83" cy="589.1" r="3"/><circle cx="722.17" cy="600" r="3"/><circle cx="726.66" cy="633.5" r="3"/><circle cx="731.14" cy="646.25" r="3"/><circle cx="735.49" cy="646.25" r="3"/><circle cx="739.97" cy="659.1" r="3"/><circle cx="744.31" cy="661.25" r="3"/><circle cx="748.8" cy="649.6" r="3"/><circle cx="753.28" cy="665" r="3"/><circle cx="757.33" cy="632.8" r="3"/><circle cx="761.82" cy="657.1" r="3"/><circle cx="766.16" cy="661" r="3"/><circle cx="770.65" cy="670.4" r="3"/><circle cx="774.99" cy="679.6" r="3"/><circle cx="779.47" cy="683.1" r="3"/><circle cx="783.96" cy="687.75" r="3"/><circle cx="788.3" cy="689.4" r="3"/><circle cx="792.78" cy="689" r="3"/><circle cx="797.12" cy="702.5" r="3"/><circle cx="801.61" cy="688.5" r="3"/><circle cx="806.09" cy="698.75" r="3"/><circle cx="810.15" cy="681" r="3"/><circle cx="814.63" cy="698.2" r="3"/><circle cx="818.97" cy="694.6" r="3"/><circle cx="823.46" cy="703.25" r="3"/><circle cx="827.8" cy="704.6" r="3"/><circle cx="832.28" cy="700.6" r="3"/><circle cx="836.77" cy="718.1" r="3"/><circle cx="841.11" cy="713.1" r="3"/><circle cx="845.59" cy="707.1" r="3"/><circle cx="849.93" cy="731.25" r="3"/><circle cx="854.42" cy="730.9" r="3"/><circle cx="858.91" cy="752.1" r="3"/><circle cx="862.96" cy="749" r="3"/><circle cx="867.44" cy="785" r="3"/><circle cx="871.78" cy="788.45" r="3"/><circle cx="876.27" cy="793.75" r="3"/><circle cx="880.61" cy="795.6" r="3"/><circle cx="885.09" cy="800.75" r="3"/><circle cx="889.58" cy="814.6" r="3"/><circle cx="893.92" cy="814.75" r="3"/><circle cx="898.41" cy="819" r="3"/><circle cx="902.75" cy="834.4" r="3"/><circle cx="907.23" cy="824.1" r="3"/><circle cx="911.72" cy="827.1" r="3"/><circle cx="915.91" cy="829.6" r="3"/><circle cx="920.4" cy="834.1" r="3"/><circle cx="924.74" cy="838.4" r="3"/><circle cx="929.22" cy="854" r="3"/><circle cx="933.57" cy="855" r="3"/><circle cx="938.05" cy="861.8" r="3"/><circle cx="942.54" cy="867.6" r="3"/><circle cx="946.88" cy="870.75" r="3"/><circle cx="951.36" cy="875.65" r="3"/><circle cx="955.7" cy="881" r="3"/><circle cx="960.19" cy="876.2" r="3"/><circle cx="964.67" cy="878.25" r="3"/><circle cx="968.73" cy="878.9" r="3"/><circle cx="973.21" cy="888" r="3"/><circle cx="977.55" cy="892.6" r="3"/><circle cx="982.04" cy="897.1" r="3"/><circle cx="986.38" cy="900" r="3"/><circle cx="990.86" cy="904" r="3"/><circle cx="995.35" cy="903.5" r="3"/><circle cx="999.69" cy="904.7" r="3"/><circle cx="1004.17" cy="906.7" r="3"/><circle cx="1008.51" cy="908" r="3"/><circle cx="1013" cy="910.7" r="3"/>
</g>
<circle cx="1013" cy="910.7" r="6" fill="none" stroke="#edc240" stroke-opacity="0.5" stroke-width="4"/>
<g font-family="Liberation Sans, Arial, sans-serif" font-size="10.83" fill="#545454">
<text x="166.63" y="928" text-anchor="middle">2010</text>
<text x="272.26" y="928" text-anchor="middle">2012</text>
<text x="378.03" y="928" text-anchor="middle">2014</text>
<text x="483.65" y="928" text-anchor="middle">2016</text>
<text x="589.42" y="928" text-anchor="middle">2018</text>
<text x="695.04" y="928" text-anchor="middle">2020</text>
<text x="800.81" y="928" text-anchor="middle">2022</text>
<text x="906.43" y="928" text-anchor="middle">2024</text>
<text x="1012.2" y="928" text-anchor="middle">2026</text>
<text x="82" y="918" text-anchor="end">0</text>
<text x="82" y="823" text-anchor="end">50000</text>
<text x="82" y="728" text-anchor="end">100000</text>
<text x="82" y="633" text-anchor="end">150000</text>
<text x="82" y="538" text-anchor="end">200000</text>
<text x="82" y="444" text-anchor="end">250000</text>
<text x="126" y="465">Questions</text>
</g>
</svg>
<div class="legbox"><i></i></div>
<div class="tip">2,274</div>
<svg class="chart" width="1067" height="944" viewBox="0 0 1067 944"><g fill="none" stroke="#00fb00" stroke-width="3.2" stroke-linejoin="miter"><rect x="88.95" y="79.15" width="49.95" height="18.7"/><rect x="1003.95" y="871.95" width="51" height="27.05"/></g></svg>
</body>
</html>
